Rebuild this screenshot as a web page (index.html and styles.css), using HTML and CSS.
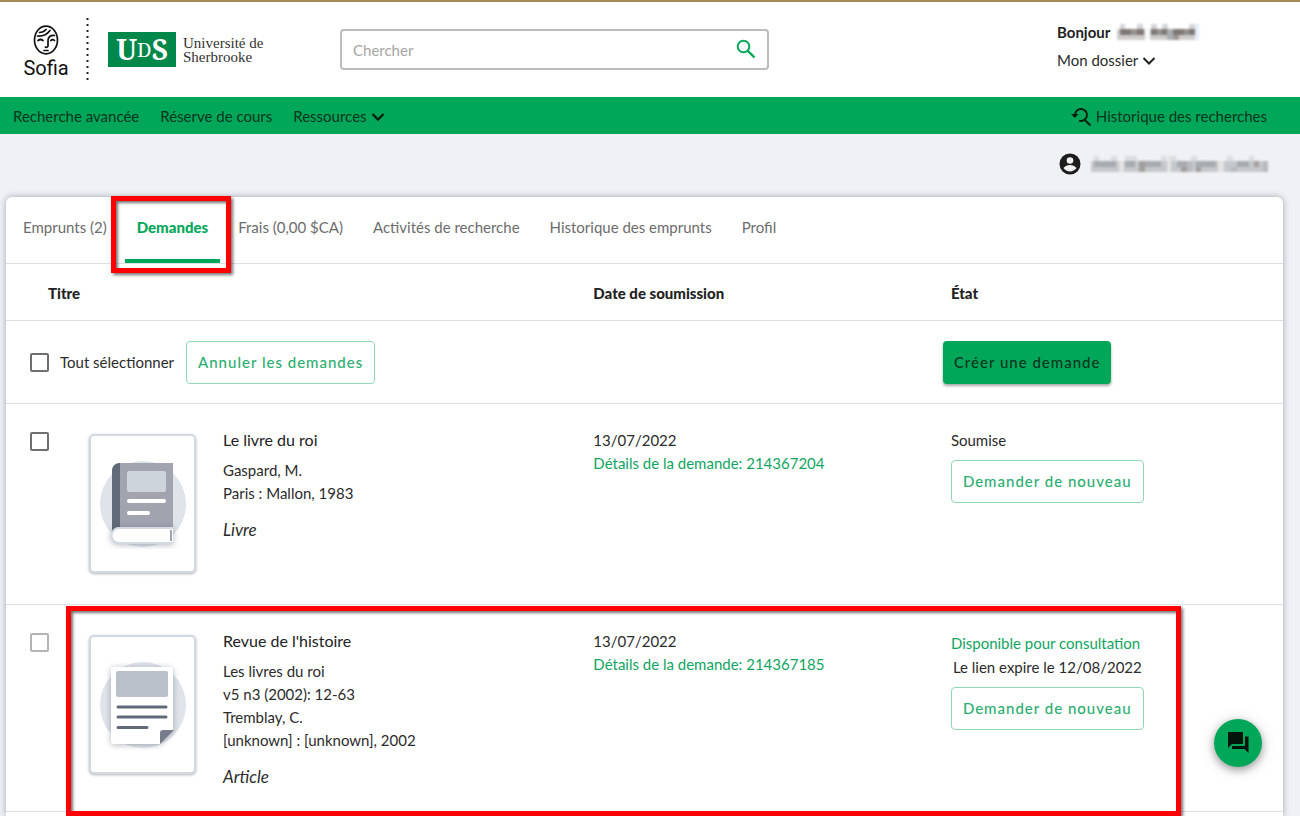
FILE: index.html
```html
<!DOCTYPE html>
<html lang="fr">
<head>
<meta charset="utf-8">
<title>Sofia – Demandes</title>
<link rel="stylesheet" href="styles.css">
</head>
<body>
<header class="top">
  <div class="brand">
    <div class="sofia">
      <svg width="26" height="32" viewBox="0 0 26 32" fill="none" stroke="#111" stroke-width="1.700" stroke-linecap="round">
        <ellipse cx="13" cy="16" rx="11.500" ry="13.800"/>
        <path d="M6.500 8.500c3 0 4.500-.8 6.500-3M4.500 12c6 .5 9.500-1.500 12.500-5.500"/>
        <path d="M21.500 11.500c-4-.5-6.500 1.500-6.500 5V22c0 1-1 1.500-2.500 1.200"/>
        <path d="M5 16.500c1.500-1.200 3.500-1.200 5 0M17.800 16.500c1.200-1 2.700-1 3.700 0M11 26.500h4"/>
      </svg>
      <span class="sofia-name">Sofia</span>
    </div>
    <svg class="dots" width="3" height="66" viewBox="0 0 3 66"><path d="M1.500 1v64" stroke="#222" stroke-width="2" stroke-dasharray="2 4"/></svg>
    <div class="uds">U<small>D</small>S</div>
    <div class="univ">Université de<br>Sherbrooke</div>
  </div>
  <form class="search">
    <input type="text" placeholder="Chercher" aria-label="Chercher">
    <button type="button" aria-label="Lancer la recherche">
      <svg width="20" height="20" viewBox="0 0 20 20" fill="none" stroke="#00a759" stroke-width="2"><circle cx="7.500" cy="7.500" r="5.800"/><path d="M11.800 11.800L18.500 18.500" stroke-width="2.400"/></svg>
    </button>
  </form>
  <div class="account">
    <div class="hello">Bonjour
      <svg class="mask" width="84" height="16" viewBox="0 0 84 16">
        <path d="M2 5h78v11H2z" fill="#cfcdcb"/>
        <path d="M5 0h5v5H5zM22 0h6v5h-6zM36 0h6v5h-6zM47 0h6v5h-6zM74 0h6v5h-6z" fill="#d5d6d8"/>
        <path d="M5 5h24v6H5zM36 5h16v6H36zM58 5h22v6H58z" fill="#7d7775"/>
        <path d="M16 5h6v6h-6zM42 5h5v6h-5zM69 5h5v6h-5z" fill="#96928f"/>
        <path d="M52 5h6v11h-6z" fill="#a9adb0"/><path d="M58 11h6v5h-6z" fill="#9d9794"/><path d="M30 3h5v13h-5z" fill="#fafafa"/><path d="M80 0h4v16h-4z" fill="#e3f0fc"/>
      </svg>
    </div>
    <button type="button" class="plain">Mon dossier
      <svg width="14" height="10" viewBox="0 0 14 10" fill="none" stroke="#222" stroke-width="2"><path d="M1.500 2L7 7.500 12.500 2"/></svg>
    </button>
  </div>
</header>
<nav class="nav">
  <a href="#">Recherche avancée</a>
  <a href="#">Réserve de cours</a>
  <a href="#">Ressources <svg width="14" height="10" viewBox="0 0 14 10" fill="none" stroke="#04210f" stroke-width="2.400"><path d="M1.500 2L7 7.500 12.500 2"/></svg></a>
  <a href="#" class="history"><svg width="21" height="20" viewBox="0 0 21 20" fill="none" stroke="#04210f" stroke-width="2"><path d="M4 8a6 6 0 1 1 4 5.600M12.800 12L19.500 18.500"/><path d="M0 7h7.500L3.800 11z" fill="#04210f" stroke="none"/></svg> Historique des recherches</a>
</nav>
<div class="user">
  <svg width="22" height="22" viewBox="0 0 22 22"><circle cx="11" cy="11" r="10.500" fill="#1c1c1c"/><circle cx="11" cy="7.500" r="3.300" fill="#eff1f4"/><path d="M4.500 15c1.500-2 4-3 6.500-3s5 1 6.500 3c-1.500 2.200-4 3.500-6.500 3.500S6 17.200 4.500 15z" fill="#eff1f4"/></svg>
  <svg class="mask" width="180" height="16" viewBox="0 0 180 16">
    <path d="M2 5h177v11H2z" fill="#c5c8cb"/>
    <path d="M5 0h5v5H5zM22 0h6v5h-6zM36 0h12v5H36zM72 0h5v5h-5zM82 0h5v5h-5zM102 0h6v5h-6zM138 0h6v5h-6zM160 0h5v5h-5z" fill="#d9dde1"/>
    <path d="M5 5h22v6H5zM36 5h10v6H36zM56 5h16v6H56zM88 5h10v6H88zM107 5h20v6h-20zM148 5h12v6h-12z" fill="#a7abb0"/>
    <path d="M50 5h6v11h-6zM92 11h6v5h-6zM165 5h5v6h-5zM107 11h5v5h-5z" fill="#a39f9d"/>
    <path d="M30 5h5v11h-5zM78 0h4v16h-4zM129 5h6v11h-6z" fill="#e4e3e3"/>
    <path d="M98 5h5v11h-5zM142 11h6v5h-6zM174 5h5v11h-5z" fill="#b7babf"/>
  </svg>
</div>
<main class="card">
  <ul class="tabs">
    <li><a href="#">Emprunts (2)</a></li>
    <li class="active"><a href="#">Demandes</a><span class="mark mark-tab"></span></li>
    <li><a href="#">Frais (0,00 $CA)</a></li>
    <li><a href="#">Activités de recherche</a></li>
    <li><a href="#">Historique des emprunts</a></li>
    <li><a href="#">Profil</a></li>
  </ul>
  <table class="requests">
    <colgroup><col class="c-check"><col class="c-cover"><col class="c-title"><col class="c-date"><col></colgroup>
    <thead>
      <tr><th colspan="3" class="h-title">Titre</th><th>Date de soumission</th><th>État</th></tr>
    </thead>
    <tbody>
      <tr class="actions">
        <td colspan="4"><div class="bulk"><label class="all"><input type="checkbox">Tout sélectionner</label><button type="button" class="btn">Annuler les demandes</button></div></td>
        <td class="create"><button type="button" class="btn solid">Créer une demande</button></td>
      </tr>
      <tr class="item">
        <td class="check"><input type="checkbox" aria-label="Le livre du roi"></td>
        <td><div class="cover">
          <svg width="86" height="90" viewBox="0 0 86 90">
            <circle cx="43" cy="45" r="43" fill="#dfe4ea"/>
            <path d="M18 4h55v66H18z" fill="#a1a4af"/>
            <path d="M20 4c-5 0-8 3-8 8v64c0-5 3-8 8-8z" fill="#626979"/>
            <path class="sheet" d="M73 69H19a7 7 0 0 0 0 15h54" fill="#fff" stroke="#d3dae4" stroke-width="2"/>
            <path d="M71 71v11" stroke="#a1a4af" stroke-width="2"/>
            <rect x="27" y="12" width="39" height="21" rx="2" fill="#cdd4dc"/>
            <path d="M29 42h35M29 54h19" stroke="#fff" stroke-width="4" stroke-linecap="round"/>
          </svg></div></td>
        <td><a href="#" class="title">Le livre du roi</a><p>Gaspard, M.<br>Paris : Mallon, 1983</p><em>Livre</em></td>
        <td>13/07/2022<br><a href="#">Détails de la demande: 214367204</a></td>
        <td>Soumise<br><button type="button" class="btn">Demander de nouveau</button></td>
      </tr>
      <tr class="item second">
        <td class="check"><input type="checkbox" disabled aria-label="Revue de l'histoire"><span class="mark mark-row"></span></td>
        <td><div class="cover">
          <svg width="86" height="90" viewBox="0 0 86 90">
            <circle cx="43" cy="45" r="43" fill="#dfe4ea"/>
            <path class="sheet" d="M14 7h56a3 3 0 0 1 3 3v60L60 84H14a3 3 0 0 1-3-3V10a3 3 0 0 1 3-3z" fill="#fff"/>
            <path d="M60 84V73q0-3 3-3h11z" fill="#767c8a"/>
            <rect x="16" y="11" width="52" height="26" rx="2" fill="#bac1cb"/>
            <path d="M18 47h48M18 57h48M18 67.500h29" stroke="#626979" stroke-width="3" stroke-linecap="round"/>
          </svg></div></td>
        <td><a href="#" class="title">Revue de l'histoire</a><p>Les livres du roi<br>v5 n3 (2002): 12-63<br>Tremblay, C.<br>[unknown] : [unknown], 2002</p><em>Article</em></td>
        <td>13/07/2022<br><a href="#">Détails de la demande: 214367185</a></td>
        <td class="status"><a href="#">Disponible pour consultation</a><span class="expire">Le lien expire le 12/08/2022</span><button type="button" class="btn">Demander de nouveau</button></td>
      </tr>
    </tbody>
  </table>
</main>
<button type="button" class="chat" aria-label="Clavardage">
  <svg width="22" height="22" viewBox="0 0 22 22" fill="#03150b"><path d="M1 0h15v12H5l-4 4z"/><path d="M18 4.500h3.500V21l-4-4H5v-3h13z"/></svg>
</button>
</body>
</html>
```

FILE: styles.css
```css
* { box-sizing: border-box; }
body { margin: 0; background: #eff1f4; color: #2b2b2b; font: 15px/23px Lato, "Open Sans", sans-serif; display: flex; flex-direction: column; height: 100vh; overflow: hidden; }
a { color: #10a561; text-decoration: none; }
button, input { font: inherit; }

.top { display: flex; flex: none; min-height: 97px; padding: 2px 0 0 24px; background: #fff; box-shadow: inset 0 2px #a08a55; }
.brand { display: flex; align-items: center; width: 316px; }
.sofia { display: flex; flex-direction: column; align-items: center; width: 44px; padding-top: 4px; }
.sofia-name { color: #111; font: 20px/24px Roboto, "Open Sans", sans-serif; }
.dots { margin: 0 19px 0 18px; }
.uds { display: flex; align-items: center; justify-content: center; width: 68px; height: 35px; background: #00874a; color: #fff; font: bold 28px/35px "Noto Serif", "Liberation Serif", serif; }
.uds small { font-size: 20px; font-weight: normal; }
.univ { margin-left: 7px; color: #333; font: 15px/14px "Liberation Serif", serif; }

.search { position: relative; align-self: center; width: 33vw; }
.search input { display: block; width: 100%; height: 41px; padding: 0 50px 0 11px; border: 2px solid #bcbcbc; border-radius: 4px; outline: 0; }
.search input::placeholder { color: #a6a6a6; }
.search button { position: absolute; right: 13px; top: 10px; display: flex; padding: 0; border: 0; background: none; }
.account { margin-left: auto; width: 243px; padding-top: 18px; }
.hello { display: flex; align-items: center; gap: 5px; height: 24px; color: #222; font-weight: bold; }
.plain { display: block; margin-top: 5px; padding: 0; border: 0; background: none; color: #2b2b2b; }
.mask { filter: blur(1px); }

.nav { display: flex; flex: none; align-items: center; gap: 21px; height: 37px; padding: 2px 33px 0 13px; background: #00a759; }
.nav a { display: flex; align-items: center; gap: 4px; color: #04351d; }
.nav .history { margin-left: auto; }

.user { display: flex; flex: none; align-items: center; justify-content: flex-end; gap: 8px; height: 63px; padding: 0 31px 4px 0; }

.card { flex: 1; min-height: 0; margin: 0 17px 0 6px; background: #fff; border-radius: 6px 6px 0 0; box-shadow: 0 0 6px rgba(40, 50, 70, .4); }
.tabs { display: flex; gap: 6px; height: 67px; margin: 0; padding: 0 5px; list-style: none; border-bottom: 1px solid #dde1e5; }
.tabs li { position: relative; padding: 19px 12px 0; }
.tabs a { color: #6c6c6c; }
.tabs .active { border-bottom: 4px solid #00a759; }
.tabs .active a { color: #00a759; font-weight: 900; }
.mark { position: absolute; z-index: 2; border: 5px solid #f00; box-shadow: 2px 2px 3px rgba(0, 0, 0, .55), inset 2px 2px 3px rgba(0, 0, 0, .55); pointer-events: none; }
.mark-tab { left: -14px; right: -11px; top: -1px; bottom: -14px; }
.mark-row { left: 60px; right: 102px; top: 1px; bottom: -4px; }

.requests { width: 100%; table-layout: fixed; border-collapse: separate; border-spacing: 0; }
.c-check { width: 60px; }
.c-cover { width: 149px; }
.c-title { width: 29%; }
.c-date { width: 28%; }
.requests th, .requests td { padding: 0 8px; border-bottom: 1px solid #dcdfe3; text-align: left; vertical-align: top; }
.requests th { height: 57px; padding-top: 2px; vertical-align: middle; color: #222; font-weight: 900; }
.requests .h-title { padding-left: 42px; }
.actions { height: 83px; }
.requests .create { padding: 20px 0 0; }
.requests .actions td:first-child { padding: 20px 0 0 24px; }
.bulk { display: flex; align-items: center; gap: 12px; }
.all { display: flex; align-items: center; gap: 11px; }
input[type="checkbox"] { appearance: none; display: block; width: 19px; height: 19px; margin: 0; border: 2px solid #6f6f6f; border-radius: 2px; background: #fff; }
input[type="checkbox"]:disabled { border-color: #b4b4b4; }
.btn { height: 43px; padding: 0 11px; border: 1px solid #8fd9b5; border-radius: 4px; background: #fff; color: #2aae70; font-weight: 500; letter-spacing: 1px; white-space: nowrap; }
.solid { border: 0; background: #00a759; color: #04351d; box-shadow: 0 2px 3px rgba(0, 0, 0, .35); }
.item { position: relative; height: 201px; }
.item.second { height: 207px; }
.requests .item td { padding-top: 25px; }
.requests .item .check { padding: 28px 0 0 24px; }
.requests .item td:nth-child(3) { padding-top: 24px; }
.cover { display: flex; align-items: center; justify-content: center; width: 107px; height: 139px; margin: 5px 0 0 15px; border: 2px solid #d2d9e2; border-radius: 5px; background: #fff; box-shadow: 0 1px 3px rgba(0, 0, 0, .3); }
.sheet { filter: drop-shadow(0 1px 3px rgba(40, 50, 70, .35)); }
.title { color: #222; font-size: 16px; }
.item p { margin: 7px 0 13px; }
.item em { font-size: 17px; }
.item .btn { margin-top: 8px; }
.requests .item .status { padding-top: 27px; }
.status a, .status span { display: block; }
.status .expire { margin: 1px 0 0 2px; }
.chat { position: fixed; right: 38px; bottom: 49px; display: flex; align-items: center; justify-content: center; width: 48px; height: 48px; padding: 0; border: 0; border-radius: 50%; background: #00a759; box-shadow: 0 3px 8px rgba(0, 0, 0, .35), 0 2px 18px rgba(0, 0, 0, .12); }
```
